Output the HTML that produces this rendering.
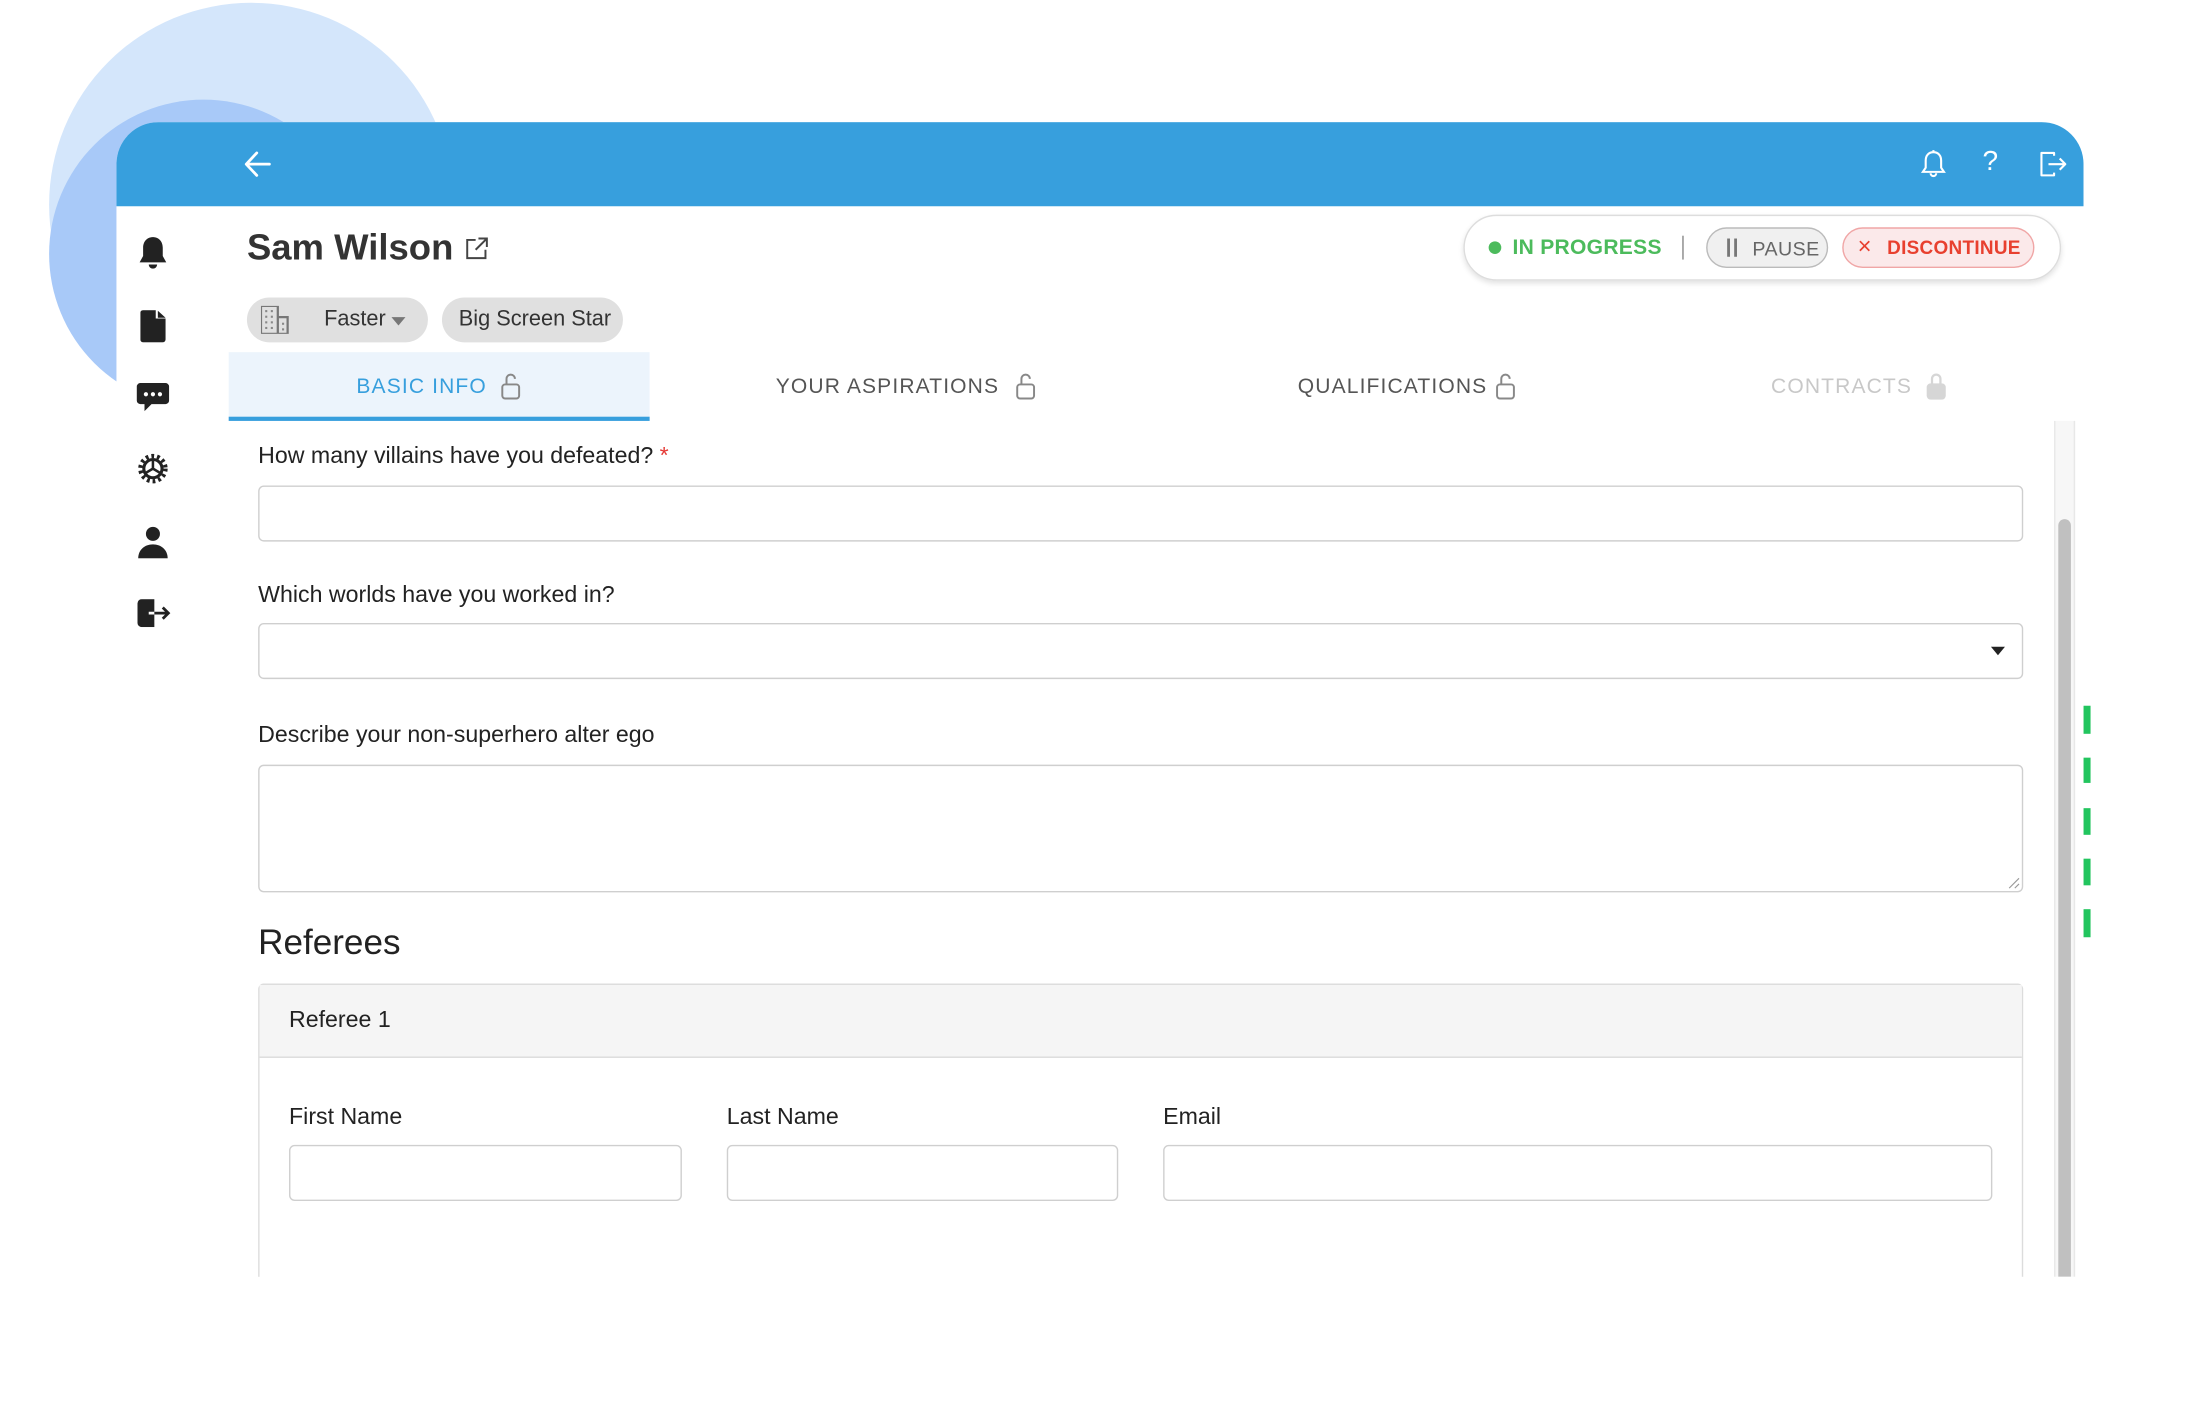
<!DOCTYPE html>
<html><head><meta charset="utf-8"><style>
html,body{margin:0;padding:0;width:2200px;height:1400px;overflow:hidden;background:#fff;font-family:"Liberation Sans",Arial,sans-serif;}
#w{position:absolute;left:0;top:0;width:1568px;height:998px;transform:scale(1.40306);transform-origin:0 0;}
.a{position:absolute;}
.lbl{position:absolute;font-size:16.5px;color:#222;}
.inp{position:absolute;border:1px solid #cfcfcf;border-radius:4px;background:#fff;box-sizing:border-box;}
.tab{position:absolute;top:251px;height:49px;font-size:15px;letter-spacing:.8px;line-height:49px;text-align:center;}
.ic{position:absolute;}
</style></head><body><div id="w">
<div class="a" style="left:35px;top:2px;width:288px;height:288px;border-radius:50%;background:#d4e6fb"></div>
<div class="a" style="left:35px;top:71px;width:220px;height:220px;border-radius:50%;background:#a8c9f8"></div>
<div class="a" style="left:83px;top:87px;width:1402px;height:823px;background:#fff;border-radius:30px 30px 0 0;overflow:hidden">
 <div class="a" style="left:0;top:0;width:1402px;height:60px;background:#379fdd"></div>
</div>
<svg class="ic" style="left:173px;top:106px" width="22" height="22" viewBox="0 0 22 22" fill="none" stroke="#fff" stroke-width="2" stroke-linecap="round" stroke-linejoin="round"><path d="M19 11H3M10 3L2.5 11 10 19"/></svg>
<svg class="ic" style="left:1368px;top:106px" width="20" height="22" viewBox="0 0 20 22" fill="none" stroke="#fff" stroke-width="1.5"><path d="M10 2.5c-3.5 0-5.5 2.5-5.5 6v5l-2 3h15l-2-3v-5c0-3.5-2-6-5.5-6zM8 17.5a2 2 0 004 0M10 1v1.5"/></svg>
<div class="a" style="left:1413px;top:104px;color:#fff;font-size:20px">?</div>
<svg class="ic" style="left:1452px;top:106px" width="22" height="22" viewBox="0 0 22 22" fill="none" stroke="#fff" stroke-width="1.5" stroke-linejoin="round"><path d="M12 5V3H3v16h9v-2M8 11h12M16 7l4 4-4 4"/></svg>
<svg class="ic" style="left:98px;top:168px" width="22" height="25" viewBox="0 0 22 25" fill="#222"><path d="M11 1c-4 0-7 3-7 7.5v6L1.5 19h19L18 14.5v-6C18 4 15 1 11 1z"/><path d="M8 20.5h6a3 3 0 01-6 0z"/></svg>
<svg class="ic" style="left:100px;top:221px" width="19" height="23" viewBox="0 0 19 23" fill="#222"><path d="M2 0h9v6h7v15a2 2 0 01-2 2H2a2 2 0 01-2-2V2a2 2 0 012-2zM12.5 0.5l5.5 5h-5.5z"/></svg>
<svg class="ic" style="left:97px;top:272px" width="24" height="23" viewBox="0 0 24 23" fill="#222"><path d="M3 1h18a2.5 2.5 0 012.5 2.5v10a2.5 2.5 0 01-2.5 2.5H11l-5 5v-5H3A2.5 2.5 0 01.5 13.5v-10A2.5 2.5 0 013 1z"/><circle cx="7" cy="9" r="1.5" fill="#fff"/><circle cx="12" cy="9" r="1.5" fill="#fff"/><circle cx="17" cy="9" r="1.5" fill="#fff"/></svg>
<svg class="ic" style="left:98px;top:323px" width="22" height="22" viewBox="0 0 22 22" fill="none" stroke="#222"><circle cx="11" cy="11" r="6.5" stroke-width="2.2"/><circle cx="11" cy="11" r="9" stroke-width="3" stroke-dasharray="2 2.1"/><path d="M11 11V5M11 11l-5 3M11 11l5 3" stroke-width="1.8"/></svg>
<svg class="ic" style="left:98px;top:375px" width="22" height="23" viewBox="0 0 22 23" fill="#222"><circle cx="11" cy="5.5" r="5"/><path d="M0.5 23c0-6 4.5-10 10.5-10s10.5 4 10.5 10z"/></svg>
<svg class="ic" style="left:98px;top:427px" width="24" height="20" viewBox="0 0 24 20" fill="#222"><path d="M3 0h9v20H3a3 3 0 01-3-3V3a3 3 0 013-3z"/><path d="M8 10h14M18 6l4 4-4 4" stroke="#222" stroke-width="2" fill="none"/><path d="M8 10h4" stroke="#fff" stroke-width="2"/></svg>
<div class="a" style="left:176px;top:161px;font-size:26px;font-weight:bold;color:#333">Sam Wilson</div>
<svg class="ic" style="left:331px;top:168px" width="18" height="18" viewBox="0 0 18 18" fill="none" stroke="#444" stroke-width="1.4"><path d="M8 3H2v13h13v-6M10 2h6v6M16 2L8 10"/></svg>
<div class="a" style="left:176px;top:212px;width:129px;height:32px;border-radius:16px;background:#e0e0e0"></div>
<svg class="ic" style="left:186px;top:218px" width="20" height="20" viewBox="0 0 20 20" fill="#888"><path d="M0 0h12v20H0zM12 8h7v12h-7z" fill="none" stroke="#777" stroke-width="1.6"/><g fill="#888"><rect x="3" y="3" width="1.5" height="1.5"/><rect x="7" y="3" width="1.5" height="1.5"/><rect x="3" y="7" width="1.5" height="1.5"/><rect x="7" y="7" width="1.5" height="1.5"/><rect x="3" y="11" width="1.5" height="1.5"/><rect x="7" y="11" width="1.5" height="1.5"/><rect x="3" y="15" width="1.5" height="1.5"/><rect x="7" y="15" width="1.5" height="1.5"/><rect x="15" y="12" width="1.5" height="1.5"/><rect x="15" y="16" width="1.5" height="1.5"/></g></svg>
<div class="a" style="left:231px;top:219px;font-size:15.5px;color:#333">Faster</div>
<div class="a" style="left:279px;top:226px;width:0;height:0;border-left:5px solid transparent;border-right:5px solid transparent;border-top:6px solid #777"></div>
<div class="a" style="left:315px;top:212px;width:129px;height:32px;border-radius:16px;background:#e0e0e0"></div>
<div class="a" style="left:327px;top:219px;font-size:15.5px;color:#333">Big Screen Star</div>
<div class="a" style="left:1043px;top:153px;width:426px;height:47px;border:1px solid #ddd;border-radius:24px;box-shadow:0 2px 4px rgba(0,0,0,.12);box-sizing:border-box"></div>
<div class="a" style="left:1061px;top:172px;width:9px;height:9px;border-radius:50%;background:#4cbb5c"></div>
<div class="a" style="left:1078px;top:168px;font-size:15px;font-weight:bold;color:#4cbb5c;letter-spacing:.2px">IN PROGRESS</div>
<div class="a" style="left:1199px;top:168px;width:1px;height:17px;background:#888"></div>
<div class="a" style="left:1216px;top:162px;width:87px;height:29px;border:1px solid #bbb;border-radius:15px;background:#f0f0f0;box-sizing:border-box"></div>
<div class="a" style="left:1231px;top:170px;width:2px;height:13px;background:#777"></div>
<div class="a" style="left:1236px;top:170px;width:2px;height:13px;background:#777"></div>
<div class="a" style="left:1249px;top:169px;font-size:14px;color:#666;letter-spacing:.3px">PAUSE</div>
<div class="a" style="left:1313px;top:162px;width:137px;height:29px;border:1px solid #f0a6a6;border-radius:15px;background:#fbe9ea;box-sizing:border-box"></div>
<div class="a" style="left:1324px;top:166px;font-size:17px;color:#e8402f">×</div>
<div class="a" style="left:1345px;top:169px;font-size:13.5px;font-weight:bold;color:#e8402f;letter-spacing:.2px">DISCONTINUE</div>
<div class="a" style="left:163px;top:251px;width:300px;height:46px;background:#ecf4fc;border-bottom:3px solid #379fdd"></div>
<div class="tab" style="left:163px;width:300px;color:#379fdd">BASIC INFO <span style="display:inline-block;width:20px"></span></div>
<div class="tab" style="left:480px;width:330px;color:#555">YOUR ASPIRATIONS <span style="display:inline-block;width:20px"></span></div>
<div class="tab" style="left:840px;width:330px;color:#555">QUALIFICATIONS <span style="display:inline-block;width:20px"></span></div>
<div class="tab" style="left:1160px;width:330px;color:#c8c8c8">CONTRACTS <span style="display:inline-block;width:20px"></span></div>
<svg class="ic" style="left:357px;top:265px" width="14" height="20" viewBox="0 0 14 20" fill="none" stroke="#888" stroke-width="1.4"><rect x="1" y="9" width="12" height="10" rx="2"/><path d="M4 9V5a3 3 0 016 0"/></svg>
<svg class="ic" style="left:724px;top:265px" width="14" height="20" viewBox="0 0 14 20" fill="none" stroke="#888" stroke-width="1.4"><rect x="1" y="9" width="12" height="10" rx="2"/><path d="M4 9V5a3 3 0 016 0"/></svg>
<svg class="ic" style="left:1066px;top:265px" width="14" height="20" viewBox="0 0 14 20" fill="none" stroke="#888" stroke-width="1.4"><rect x="1" y="9" width="12" height="10" rx="2"/><path d="M4 9V5a3 3 0 016 0"/></svg>
<svg class="ic" style="left:1373px;top:265px" width="14" height="20" viewBox="0 0 14 20" fill="#d6d6d6" stroke="#d6d6d6" stroke-width="1.6"><rect x="1" y="9" width="12" height="10" rx="2"/><path d="M4 9V5a3 3 0 016 0v4" fill="none"/></svg>
<div class="a" style="left:1464px;top:300px;width:15px;height:610px;background:#f7f7f7;border-left:1px solid #e8e8e8;border-right:1px solid #e8e8e8;box-sizing:border-box"></div>
<div class="a" style="left:1467px;top:370px;width:9px;height:540px;background:#c0c0c0;border-radius:5px 5px 0 0"></div>
<div class="a" style="left:1485px;top:503px;width:5px;height:20px;background:#22c55e"></div>
<div class="a" style="left:1485px;top:540px;width:5px;height:18px;background:#22c55e"></div>
<div class="a" style="left:1485px;top:576px;width:5px;height:19px;background:#22c55e"></div>
<div class="a" style="left:1485px;top:612px;width:5px;height:19px;background:#22c55e"></div>
<div class="a" style="left:1485px;top:648px;width:5px;height:20px;background:#22c55e"></div>
<div class="lbl" style="left:184px;top:316px">How many villains have you defeated? <span style="color:#e53935">*</span></div>
<div class="inp" style="left:184px;top:346px;width:1258px;height:40px"></div>
<div class="lbl" style="left:184px;top:415px">Which worlds have you worked in?</div>
<div class="inp" style="left:184px;top:444px;width:1258px;height:40px"></div>
<div class="a" style="left:1419px;top:461px;width:0;height:0;border-left:5px solid transparent;border-right:5px solid transparent;border-top:6px solid #222"></div>
<div class="lbl" style="left:184px;top:515px">Describe your non-superhero alter ego</div>
<div class="inp" style="left:184px;top:545px;width:1258px;height:91px"></div>
<svg class="ic" style="left:1431px;top:625px" width="9" height="9" viewBox="0 0 9 9" stroke="#999" stroke-width="0.8"><path d="M8 1L1 8M8 5L5 8"/></svg>
<div class="a" style="left:184px;top:658px;font-size:25px;color:#222">Referees</div>
<div class="a" style="left:184px;top:701px;width:1258px;height:240px;border:1px solid #dcdcdc;border-radius:4px 4px 0 0;box-sizing:border-box"></div>
<div class="a" style="left:185px;top:702px;width:1256px;height:51px;background:#f5f5f5;border-bottom:1px solid #dcdcdc"></div>
<div class="lbl" style="left:206px;top:718px">Referee 1</div>
<div class="lbl" style="left:206px;top:787px">First Name</div>
<div class="lbl" style="left:518px;top:787px">Last Name</div>
<div class="lbl" style="left:829px;top:787px">Email</div>
<div class="inp" style="left:206px;top:816px;width:280px;height:40px"></div>
<div class="inp" style="left:518px;top:816px;width:279px;height:40px"></div>
<div class="inp" style="left:829px;top:816px;width:591px;height:40px"></div>
<div class="a" style="left:0;top:910px;width:1568px;height:90px;background:#fff"></div>
</div></body></html>
